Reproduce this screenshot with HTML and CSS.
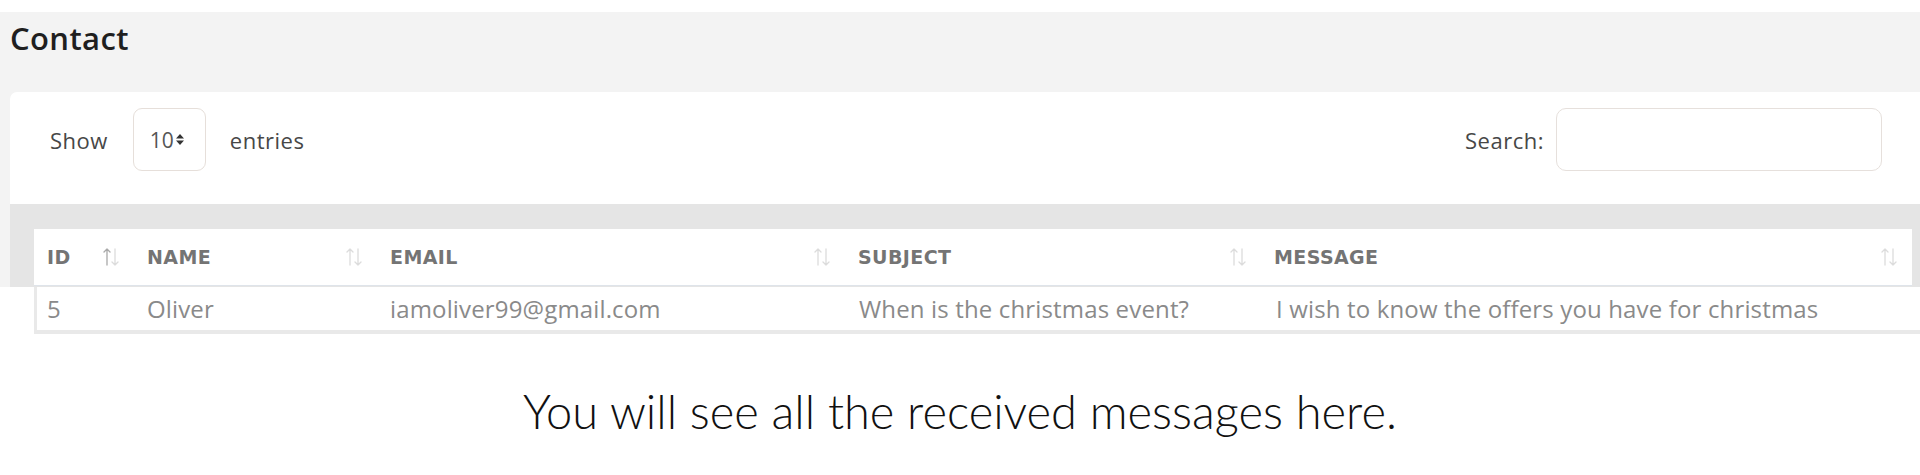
FILE: index.html
```html
<!DOCTYPE html>
<html>
<head>
<meta charset="utf-8">
<link rel="stylesheet" href="styles.css">
</head>
<body>
<section class="panel">
  <h1 class="title">Contact</h1>
  <div class="card">
    <div class="controls">
      <div class="length">
        <span class="label">Show</span>
        <div class="select"><span>10</span><svg class="updown" width="10" height="13" viewBox="0 0 10 13"><path d="M1 5.5 L5 1 L9 5.5 Z M1 7.5 L5 12 L9 7.5 Z" fill="#333"/></svg></div>
        <span class="label">entries</span>
      </div>
      <div class="search">
        <span class="label">Search:</span>
        <div class="input"></div>
      </div>
    </div>
    <div class="band">
      <div class="row head">
        <div class="cell">ID<svg class="sort" width="22" height="20" viewBox="0 0 22 20"><g fill="none" stroke-width="1.3" stroke-linecap="round" stroke-linejoin="round"><path d="M7 2 V18 M4 5 L7 2 L10 5" stroke="#a9a9a9"/><path d="M15 2 V18 M12 15 L15 18 L18 15" stroke="#dcdcdc"/></g></svg></div>
        <div class="cell">Name<svg class="sort" width="22" height="20" viewBox="0 0 22 20"><g fill="none" stroke="#dcdcdc" stroke-width="1.3" stroke-linecap="round" stroke-linejoin="round"><path d="M7 2 V18 M4 5 L7 2 L10 5"/><path d="M15 2 V18 M12 15 L15 18 L18 15"/></g></svg></div>
        <div class="cell">Email<svg class="sort" width="22" height="20" viewBox="0 0 22 20"><g fill="none" stroke="#dcdcdc" stroke-width="1.3" stroke-linecap="round" stroke-linejoin="round"><path d="M7 2 V18 M4 5 L7 2 L10 5"/><path d="M15 2 V18 M12 15 L15 18 L18 15"/></g></svg></div>
        <div class="cell">Subject<svg class="sort" width="22" height="20" viewBox="0 0 22 20"><g fill="none" stroke="#dcdcdc" stroke-width="1.3" stroke-linecap="round" stroke-linejoin="round"><path d="M7 2 V18 M4 5 L7 2 L10 5"/><path d="M15 2 V18 M12 15 L15 18 L18 15"/></g></svg></div>
        <div class="cell">Message<svg class="sort" width="22" height="20" viewBox="0 0 22 20"><g fill="none" stroke="#dcdcdc" stroke-width="1.3" stroke-linecap="round" stroke-linejoin="round"><path d="M7 2 V18 M4 5 L7 2 L10 5"/><path d="M15 2 V18 M12 15 L15 18 L18 15"/></g></svg></div>
      </div>
    </div>
  </div>
</section>
<div class="row data">
  <div class="cell">5</div>
  <div class="cell">Oliver</div>
  <div class="cell">iamoliver99@gmail.com</div>
  <div class="cell">When is the christmas event?</div>
  <div class="cell">I wish to know the offers you have for christmas</div>
</div>
<p class="caption">You will see all the received messages here.</p>
</body>
</html>
```

FILE: styles.css
```css
* { box-sizing: border-box; }
html, body { margin: 0; padding: 0; background: #ffffff; }
body { font-family: "Open Sans", "Liberation Sans", sans-serif; }

.panel {
  margin-top: 12px;
  background: #f3f3f3;
  padding-left: 10px;
}
.title {
  margin: 0;
  height: 80px;
  padding-top: 6px;
  font-size: 31px;
  line-height: 40px;
  font-weight: 600;
  letter-spacing: 0.4px;
  color: #1f1f1f;
}
.card {
  background: #ffffff;
  border-top-left-radius: 7px;
}
.controls {
  display: flex;
  justify-content: space-between;
  align-items: center;
  padding: 16px 38px 33px 40px;
}
.length, .search {
  display: flex;
  align-items: center;
}
.label {
  font-size: 22px;
  letter-spacing: 0.5px;
  color: #474747;
}
.length .select {
  width: 73px;
  height: 63px;
  margin: 0 24px 0 25px;
  border: 1px solid #e6dfda;
  border-radius: 9px;
  display: flex;
  align-items: center;
  padding-left: 16px;
  font-size: 21px;
  color: #555;
  gap: 1px;
}
.search .input {
  width: 326px;
  height: 63px;
  margin-left: 12px;
  border: 1px solid #e6e0dc;
  border-radius: 10px;
}
.band {
  background: #e5e5e5;
  padding: 25px 8px 1px 24px;
}
.row {
  display: grid;
  grid-template-columns: 100px 243px 468px 416px 1fr;
  align-items: center;
}
.head {
  background: #fff;
  height: 57px;
  border-bottom: 1px solid #dfe4ea;
}
.head .cell {
  display: flex;
  align-items: center;
  justify-content: space-between;
  padding: 0 12px 0 13px;
  font-family: "DejaVu Sans", "Open Sans", sans-serif;
  font-size: 19px;
  font-weight: 700;
  text-transform: uppercase;
  color: #747474;
  letter-spacing: 0.4px;
}
.sort { flex: none; }
.data {
  margin-left: 34px;
  height: 47px;
  background: #fff;
  border-left: 3px solid #e9e9e9;
  border-bottom: 4px solid #e9e9e9;
}
.data .cell {
  padding-left: 10px;
  font-size: 24px;
  letter-spacing: 0.15px;
  color: #8a8a8a;
  white-space: nowrap;
}
.data .cell:nth-child(4) { padding-left: 11px; }
.data .cell:nth-child(5) { padding-left: 12px; }
.caption {
  margin: 49px 0 0;
  text-align: center;
  font-family: Lato, "Noto Sans", sans-serif;
  font-weight: 300;
  font-size: 47px;
  line-height: 56px;
  color: #111;
}
```
